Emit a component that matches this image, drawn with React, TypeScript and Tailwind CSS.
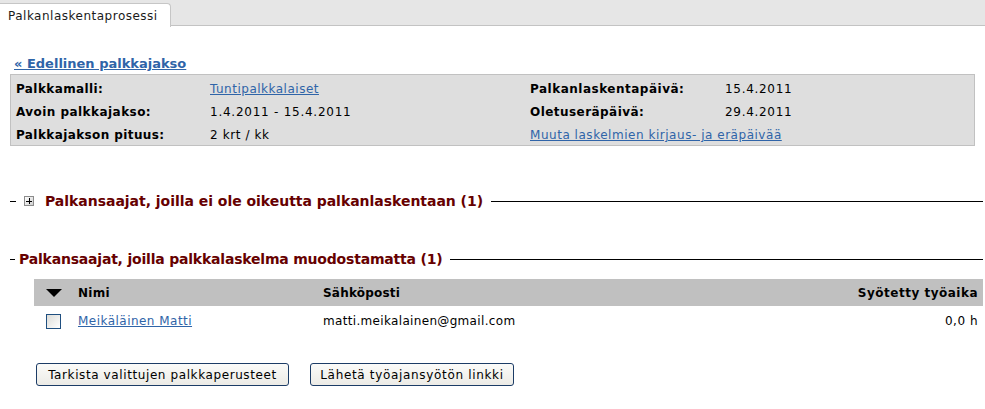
import React from "react";

const font = { fontFamily: '"DejaVu Sans", Verdana, sans-serif' };

function Legend({ plus, text, lead, track }: { plus?: boolean; text: string; lead: string; track: string }) {
  return (
    <div className="flex items-center ml-[10px] mr-[2px]">
      <div className={`h-px bg-black ${lead}`} />
      {plus ? (
        <div className="flex items-center ml-[8px] mr-[11px]">
          <div className="w-[10px] h-[10px] border border-[#8c8c8c] bg-gradient-to-br from-white to-[#d0d0d0] flex items-center justify-center relative">
            <div className="absolute w-[6px] h-px bg-black" />
            <div className="absolute w-px h-[6px] bg-black" />
          </div>
        </div>
      ) : (
        <div className="w-[4px]" />
      )}
      <span className={`text-[14px] font-bold text-[#660000] leading-[18px] whitespace-nowrap ${track}`}>{text}</span>
      <div className="flex-1 h-px bg-black ml-[8px]" />
    </div>
  );
}

export default function App() {
  return (
    <div className="w-[985px] h-[409px] bg-white text-[12px] text-black overflow-hidden" style={font}>
      {/* Tab bar */}
      <div className="flex h-[26px] bg-[#e6e6e6] border-b border-[#c3c3c3]">
        <div className="relative mt-[3px] w-[171px] h-[24px] bg-white border-t border-r border-[#c6c6c6] rounded-tr-[4px] flex items-center pl-[8px] text-[12px] text-[#1a1a1a] tracking-[0.5px]">
          Palkanlaskentaprosessi
        </div>
      </div>

      {/* Previous link */}
      <div className="pl-[14px] pt-[29px]">
        <a href="#" className="text-[13px] font-bold text-[#2f64a8] underline leading-[18px] block">
          « Edellinen palkkajakso
        </a>
      </div>

      {/* Info box */}
      <div className="mx-[10px] mt-[1px] bg-[#dedede] border border-[#c1c1c1] h-[72px] pt-[3px]">
        <div className="grid grid-cols-[194px_320px_195px_1fr] pl-[5px] leading-[23px]">
          <div className="font-bold tracking-[0.4px]">Palkkamalli:</div>
          <div><a href="#" className="text-[#2f64a8] underline tracking-[0.5px]">Tuntipalkkalaiset</a></div>
          <div className="font-bold tracking-[0.5px]">Palkanlaskentapäivä:</div>
          <div className="tracking-[0.7px]">15.4.2011</div>
          <div className="font-bold tracking-[0.45px]">Avoin palkkajakso:</div>
          <div className="tracking-[0.75px]">1.4.2011 - 15.4.2011</div>
          <div className="font-bold tracking-[0.45px]">Oletuseräpäivä:</div>
          <div className="tracking-[0.7px]">29.4.2011</div>
          <div className="font-bold tracking-[0.4px]">Palkkajakson pituus:</div>
          <div className="tracking-[0.6px]">2 krt / kk</div>
          <div className="col-span-2"><a href="#" className="text-[#2f64a8] underline tracking-[0.53px]">Muuta laskelmien kirjaus- ja eräpäivää</a></div>
        </div>
      </div>

      <div className="h-[46px]" />
      <Legend plus lead="w-[6px]" track="tracking-[-0.03px]" text="Palkansaajat, joilla ei ole oikeutta palkanlaskentaan (1)" />
      <div className="h-[40px]" />
      <Legend lead="w-[5px]" track="tracking-[-0.2px]" text="Palkansaajat, joilla palkkalaskelma muodostamatta (1)" />

      {/* Table */}
      <div className="ml-[34px] mr-[2px] mt-[11px]">
        <div className="flex items-center h-[27px] bg-[#c0c0c0] font-bold">
          <div className="w-[44px] pl-[12px] flex">
            <svg width="16" height="8" viewBox="0 0 16 8"><polygon points="0,0 16,0 8,8" fill="#000" /></svg>
          </div>
          <div className="w-[245px] tracking-[0.3px]">Nimi</div>
          <div className="flex-1 tracking-[0.2px]">Sähköposti</div>
          <div className="pr-[5px] tracking-[0.5px]">Syötetty työaika</div>
        </div>
        <div className="flex items-center h-[30px]">
          <div className="w-[44px] pl-[12px] flex">
            <div className="w-[15px] h-[15px] border border-[#1f4f80] bg-gradient-to-br from-[#dcdcd8] to-white" />
          </div>
          <div className="w-[245px]"><a href="#" className="text-[#2f64a8] underline tracking-[0.47px]">Meikäläinen Matti</a></div>
          <div className="flex-1 tracking-[0.33px]">matti.meikalainen@gmail.com</div>
          <div className="pr-[5px] tracking-[0.5px]">0,0 h</div>
        </div>
      </div>

      {/* Buttons */}
      <div className="flex gap-[21px] ml-[36px] mt-[27px]">
        <button className="h-[23px] w-[253px] border border-[#1c3c66] rounded-[3px] bg-gradient-to-b from-[#fbfbf9] to-[#ecebe6] text-[12px] text-black tracking-[0.6px] whitespace-nowrap">
          Tarkista valittujen palkkaperusteet
        </button>
        <button className="h-[23px] w-[204px] border border-[#1c3c66] rounded-[3px] bg-gradient-to-b from-[#fbfbf9] to-[#ecebe6] text-[12px] text-black tracking-[0.67px] whitespace-nowrap">
          Lähetä työajansyötön linkki
        </button>
      </div>
    </div>
  );
}
